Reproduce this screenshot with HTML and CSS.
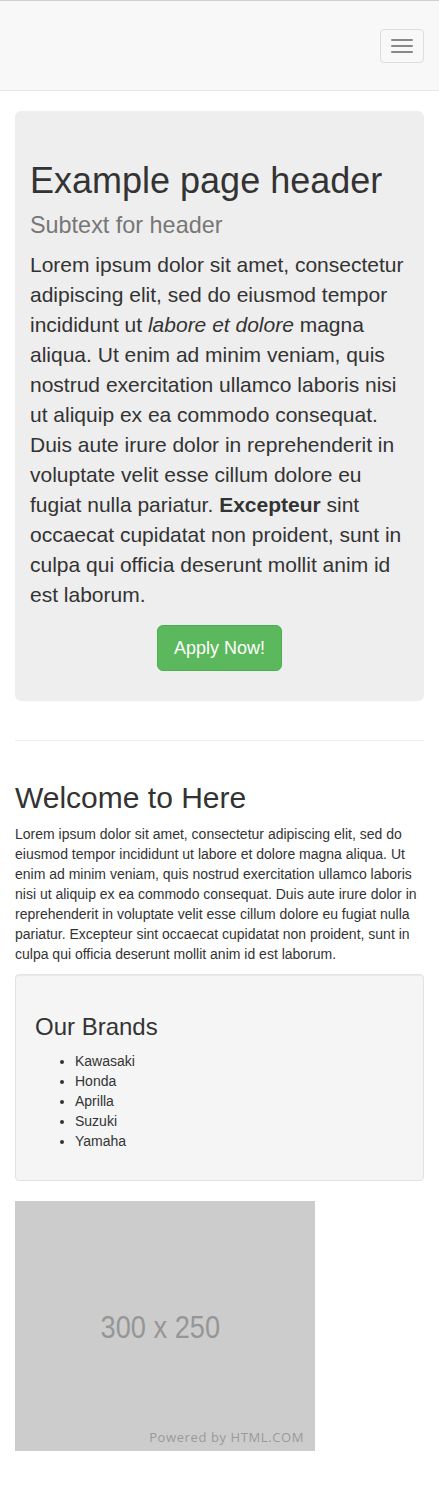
FILE: index.html
```html
<!DOCTYPE html>
<html lang="en">
<head>
<meta charset="utf-8">
<title>Example page</title>
<link rel="stylesheet" href="styles.css">
</head>
<body>
<nav class="navbar">
  <button class="navbar-toggle" type="button" aria-label="Toggle navigation">
    <span class="icon-bar"></span>
    <span class="icon-bar"></span>
    <span class="icon-bar"></span>
  </button>
</nav>
<main class="container">
  <section class="jumbotron">
    <h1>Example page header<br><small>Subtext for header</small></h1>
    <p>Lorem ipsum dolor sit amet, consectetur adipiscing elit, sed do eiusmod tempor incididunt ut <em>labore et dolore</em> magna aliqua. Ut enim ad minim veniam, quis nostrud exercitation ullamco laboris nisi ut aliquip ex ea commodo consequat. Duis aute irure dolor in reprehenderit in voluptate velit esse cillum dolore eu fugiat nulla pariatur. <strong>Excepteur</strong> sint occaecat cupidatat non proident, sunt in culpa qui officia deserunt mollit anim id est laborum.</p>
    <div class="cta"><a class="btn-apply" href="#">Apply Now!</a></div>
  </section>
  <hr class="divider">
  <h2 class="welcome">Welcome to Here</h2>
  <p class="intro">Lorem ipsum dolor sit amet, consectetur adipiscing elit, sed do eiusmod tempor incididunt ut labore et dolore magna aliqua. Ut enim ad minim veniam, quis nostrud exercitation ullamco laboris nisi ut aliquip ex ea commodo consequat. Duis aute irure dolor in reprehenderit in voluptate velit esse cillum dolore eu fugiat nulla pariatur. Excepteur sint occaecat cupidatat non proident, sunt in culpa qui officia deserunt mollit anim id est laborum.</p>
  <div class="well">
    <h3>Our Brands</h3>
    <ul class="brands">
      <li>Kawasaki</li>
      <li>Honda</li>
      <li>Aprilla</li>
      <li>Suzuki</li>
      <li>Yamaha</li>
    </ul>
  </div>
  <div class="ad">
    <span class="ad-size">300 x 250</span>
    <span class="ad-credit">Powered by HTML.COM</span>
  </div>
</main>
</body>
</html>
```
FILE: styles.css
```css
* { box-sizing: border-box; }
html, body { margin: 0; padding: 0; }
body {
  font-family: "Liberation Sans", Arial, Helvetica, sans-serif;
  font-size: 14px;
  line-height: 20px;
  color: #333;
  background: #fff;
}
.navbar {
  display: flex;
  justify-content: flex-end;
  height: 91px;
  padding: 28px 15px 0;
  background: #f8f8f8;
  border-top: 1px solid #cfcfcf;
  border-bottom: 1px solid #e7e7e7;
  margin-bottom: 20px;
}
.navbar-toggle {
  display: flex;
  flex-direction: column;
  gap: 4px;
  width: 44px;
  height: 34px;
  padding: 9px 10px;
  background: transparent;
  border: 1px solid #ddd;
  border-radius: 4px;
}
.icon-bar {
  display: block;
  width: 22px;
  height: 2px;
  background: #888;
  border-radius: 1px;
}
.container { padding: 0 15px 48px; }
.jumbotron {
  background: #eee;
  border-radius: 6px;
  padding: 30px 15px;
  margin-bottom: 39px;
}
.jumbotron h1 {
  font-size: 36px;
  line-height: 1.1;
  font-weight: 500;
  margin: 20px 0 10px;
  color: #333;
}
.jumbotron h1 small {
  font-size: 65%;
  font-weight: 400;
  line-height: 1;
  color: #777;
}
.jumbotron p {
  font-size: 21px;
  line-height: 30px;
  margin: 0 0 15px;
}
.cta { display: flex; justify-content: center; }
.btn-apply {
  display: inline-block;
  padding: 10px 16px;
  font-size: 18px;
  line-height: 24px;
  color: #fff;
  text-decoration: none;
  background: #5cb85c;
  border: 1px solid #4cae4c;
  border-radius: 6px;
}
.divider {
  margin: 0;
  border: 0;
  border-top: 1px solid #eee;
}
.welcome {
  font-size: 30px;
  line-height: 1.1;
  font-weight: 500;
  margin: 40px 0 10px;
}
.intro { margin: 0 0 10px; }
.well {
  background: #f5f5f5;
  border: 1px solid #e3e3e3;
  border-radius: 4px;
  box-shadow: inset 0 1px 1px rgba(0,0,0,.05);
  padding: 19px;
  margin-bottom: 20px;
}
.well h3 {
  font-size: 24px;
  line-height: 1.1;
  font-weight: 500;
  margin: 20px 0 10px;
}
.brands { margin: 0 0 10px; padding-left: 40px; }
.ad {
  position: relative;
  display: flex;
  align-items: center;
  justify-content: center;
  width: 300px;
  height: 250px;
  margin-top: 1px;
  background: #ccc;
}
.ad-size {
  font-size: 32px;
  line-height: 1;
  color: #969696;
  transform: scaleX(0.85);
  margin: 2px 0 0 -9px;
}
.ad-credit {
  position: absolute;
  right: 11px;
  bottom: 5px;
  font-family: "Open Sans", "DejaVu Sans", sans-serif;
  font-size: 13px;
  line-height: 18px;
  color: #9a9a9a;
  letter-spacing: 0.6px;
}
```
